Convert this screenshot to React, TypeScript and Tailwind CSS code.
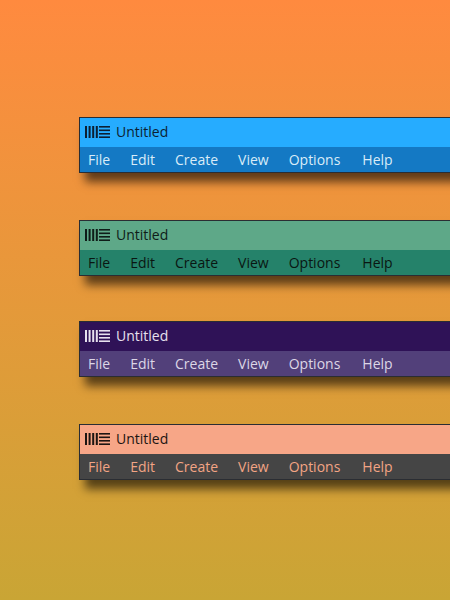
import React from 'react';

const LogoIcon: React.FC = () => (
  <svg width="26" height="12" viewBox="0 0 26 12" fill="currentColor" className="shrink-0">
    <rect x="0" y="0" width="2" height="12" />
    <rect x="3.6" y="0" width="2" height="12" />
    <rect x="7.2" y="0" width="2" height="12" />
    <rect x="10.8" y="0" width="2" height="12" />
    <rect x="14" y="0" width="11" height="1.6" />
    <rect x="14" y="3.5" width="11" height="1.6" />
    <rect x="14" y="7" width="11" height="1.6" />
    <rect x="14" y="10.4" width="11" height="1.6" />
  </svg>
);

const menus = ['File', 'Edit', 'Create', 'View', 'Options', 'Help'];

const MenuBar: React.FC<{ className: string; titleClass: string; menuClass: string }> = ({
  className,
  titleClass,
  menuClass,
}) => (
  <div className={`w-[480px] border border-[#2a2d33] shadow-[6px_9px_9px_rgba(0,0,0,0.6)] ${className}`}>
    <div className={`flex h-[29px] items-center pb-[2px] pl-[5px] ${titleClass}`}>
      <LogoIcon />
      <span className="ml-[5px] text-[14px]">Untitled</span>
    </div>
    <div className={`flex h-[25px] items-center gap-[20px] pl-[8px] text-[14px] ${menuClass}`}>
      {menus.map((m) => (
        <span key={m} className="last:ml-[2px]">
          {m}
        </span>
      ))}
    </div>
  </div>
);

export default function App() {
  return (
    <div
      className="h-[600px] w-[450px] overflow-hidden bg-gradient-to-b from-[#ff8a3f] to-[#c9a535] pl-[79px] pt-[117px]"
      style={{ fontFamily: '"Open Sans", sans-serif' }}
    >
      <MenuBar className="mb-[47px]" titleClass="bg-[#26acff] text-[#0c1f33]" menuClass="bg-[#1479c4] text-[#d9ecf8]" />
      <MenuBar className="mb-[45px]" titleClass="bg-[#5ea888] text-[#0f1c18]" menuClass="bg-[#25826a] text-[#0a1612]" />
      <MenuBar className="mb-[47px]" titleClass="bg-[#2f1257] text-[#e6e0ee]" menuClass="bg-[#52407a] text-[#dcd6e6]" />
      <MenuBar className="" titleClass="bg-[#f7a687] text-[#1d1512]" menuClass="bg-[#454545] text-[#f2a484]" />
    </div>
  );
}
